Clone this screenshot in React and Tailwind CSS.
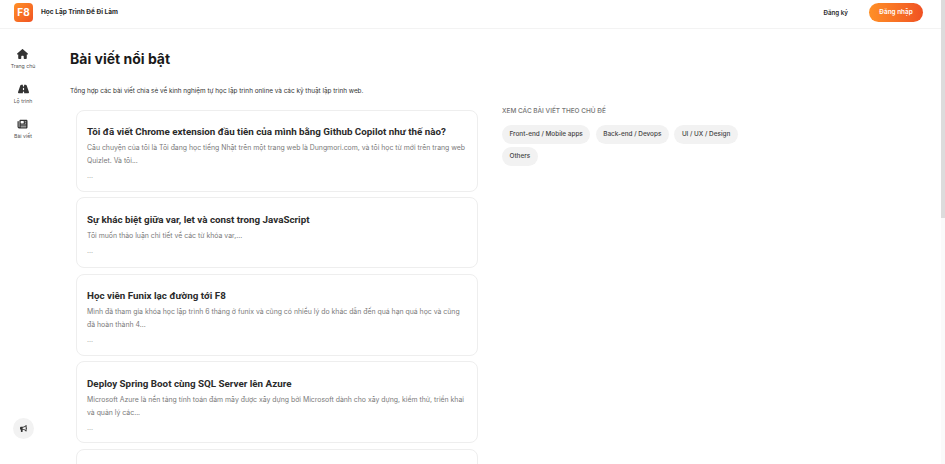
import { FaHouse, FaRoad, FaNewspaper, FaBullhorn } from 'react-icons/fa6';

const navItems = [
  { label: 'Trang chủ', Icon: FaHouse },
  { label: 'Lộ trình', Icon: FaRoad },
  { label: 'Bài viết', Icon: FaNewspaper },
];

const posts = [
  {
    title: 'Tôi đã viết Chrome extension đầu tiên của mình bằng Github Copilot như thế nào?',
    desc: 'Câu chuyện của tôi là Tôi đang học tiếng Nhật trên một trang web là Dungmori.com, và tôi học từ mới trên trang web Quizlet. Và tôi...',
    height: 'h-[82px]',
  },
  {
    title: 'Sự khác biệt giữa var, let và const trong JavaScript',
    desc: 'Tôi muốn thảo luận chi tiết về các từ khóa var,...',
    height: 'h-[71px]',
  },
  {
    title: 'Học viên Funix lạc đường tới F8',
    desc: 'Mình đã tham gia khóa học lập trình 6 tháng ở funix và cũng có nhiều lý do khác dẫn đến quá hạn quá học và cũng đã hoàn thành 4...',
    height: 'h-[82px]',
  },
  {
    title: 'Deploy Spring Boot cùng SQL Server lên Azure',
    desc: 'Microsoft Azure là nền tảng tính toán đám mây được xây dựng bởi Microsoft dành cho xây dựng, kiểm thử, triển khai và quản lý các...',
    height: 'h-[82px]',
  },
];

const topics = ['Front-end / Mobile apps', 'Back-end / Devops', 'UI / UX / Design', 'Others'];

const PostCard = ({ title, desc, height }) => (
  <div className={`${height} shrink-0 rounded-[8px] border border-[#eeeeee] bg-white pl-[10px] pr-[10px] pt-[13.5px]`}>
    <h3 className="font-['Roboto',sans-serif] text-[9.8px] font-bold leading-[16px] text-[#2b2b2b]">{title}</h3>
    <p className="mt-[1px] text-[6.9px] leading-[13px] text-[#7a7a7a]">{desc}</p>
    <div className="mt-[3px] text-[7px] leading-[12px] text-[#aaaaaa]">...</div>
  </div>
);

const App = () => {
  return (
    <div className="relative h-screen overflow-hidden bg-white font-['Inter',sans-serif]">
      <header className="flex h-[29px] items-center border-b border-[#f3f3f3] pl-[14px] pr-[22px] pb-[3px]">
        <div className="flex h-[19px] w-[19px] items-center justify-center rounded-[4px] bg-gradient-to-br from-[#ff8f26] to-[#f05123] text-[10px] font-bold text-white">F8</div>
        <span className="ml-[8px] text-[6.5px] font-bold text-[#292929]">Học Lập Trình Để Đi Làm</span>
        <span className="ml-auto text-[6.2px] font-semibold text-[#292929]">Đăng ký</span>
        <button className="ml-[21px] h-[19px] w-[54px] rounded-full bg-gradient-to-r from-[#ff8f26] to-[#f05123] text-[6.4px] font-semibold text-white">Đăng nhập</button>
      </header>

      <div className="flex">
        <aside className="flex h-[435px] w-[46px] shrink-0 flex-col items-center pt-[20px]">
          {navItems.map(({ label, Icon }) => (
            <div key={label} className="mb-[14px] flex h-[21px] flex-col items-center">
              <Icon className="text-[11px] text-[#333333]" />
              <span className="mt-[3px] whitespace-nowrap text-[5.2px] leading-[8px] text-[#555555]">{label}</span>
            </div>
          ))}
          <div className="mt-auto mb-[25px] flex h-[21px] w-[21px] items-center justify-center rounded-full bg-[#f2f2f2]">
            <FaBullhorn className="text-[7px] text-[#333333]" />
          </div>
        </aside>

        <main className="ml-[24px] w-[408px] shrink-0 pt-[19px]">
          <h1 className="text-[14px] font-bold leading-[22px] text-[#1a1a1a]">Bài viết nổi bật</h1>
          <p className="mt-[15px] whitespace-nowrap text-[6.4px] leading-[12px] text-[#333333]">Tổng hợp các bài viết chia sẻ về kinh nghiệm tự học lập trình online và các kỹ thuật lập trình web.</p>
          <div className="ml-[6px] mt-[12.9px] flex w-[402px] flex-col gap-[5.5px]">
            {posts.map((post) => (
              <PostCard key={post.title} {...post} />
            ))}
            <div className="h-[60px] shrink-0 rounded-[8px] border border-[#eeeeee] bg-white" />
          </div>
        </main>

        <section className="ml-[24px] w-[240px] pt-[76px]">
          <h4 className="text-[6.45px] font-medium uppercase leading-[12px] text-[#757575]">Xem các bài viết theo chủ đề</h4>
          <div className="mt-[8px] flex flex-wrap gap-x-[5.5px] gap-y-[3px]">
            {topics.map((topic) => (
              <span key={topic} className="flex h-[19px] items-center rounded-full bg-[#f2f2f2] px-[7.5px] text-[6.4px] font-medium text-[#444444]">{topic}</span>
            ))}
          </div>
        </section>
      </div>

      <div className="absolute right-0 top-0 h-full w-[4px] bg-[#fafafa]">
        <div className="h-[218px] w-full bg-[#dcdcdc]" />
      </div>
    </div>
  );
};

export default App;
